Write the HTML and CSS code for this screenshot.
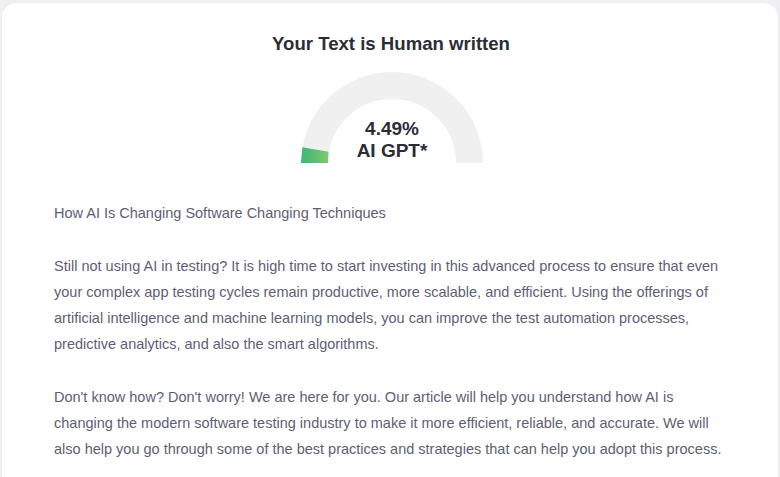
FILE: index.html
```html
<!DOCTYPE html>
<html>
<head>
<meta charset="utf-8">
<link rel="stylesheet" href="styles.css">
</head>
<body>
<div class="card">
  <h1 class="title">Your Text is Human written</h1>
  <div class="gauge">
    <svg class="gauge-svg" width="184" height="93" viewBox="0 0 184 93">
      <defs>
        <linearGradient id="g" x1="0" y1="0" x2="1" y2="0">
          <stop offset="0" stop-color="#3db57a"/>
          <stop offset="1" stop-color="#7cc96c"/>
        </linearGradient>
      </defs>
      <path d="M 14.5 92 A 77.5 77.5 0 0 1 169.5 92" fill="none" stroke="#f0f0f0" stroke-width="27"/>
      <path d="M 1 92 L 28 92 L 28.6 80.7 L 2.4 76.2 Z" fill="url(#g)"/>
    </svg>
    <div class="gauge-label">
      <div>4.49%</div>
      <div>AI GPT*</div>
    </div>
  </div>
  <div class="text">
    <p>How AI Is Changing Software Changing Techniques</p>
    <p>Still not using AI in testing? It is high time to start investing in this advanced process to ensure that even your complex app testing cycles remain productive, more scalable, and efficient. Using the offerings of artificial intelligence and machine learning models, you can improve the test automation processes, predictive analytics, and also the smart algorithms.</p>
    <p>Don't know how? Don't worry! We are here for you. Our article will help you understand how AI is changing the modern software testing industry to make it more efficient, reliable, and accurate. We will also help you go through some of the best practices and strategies that can help you adopt this process.</p>
  </div>
</div>
</body>
</html>
```
FILE: styles.css
```css
html, body {
  margin: 0;
  padding: 0;
  background: #eef0f3;
  font-family: "Liberation Sans", Arial, sans-serif;
}
body {
  padding: 3px 2px 0 2px;
  height: 477px;
  box-sizing: border-box;
  overflow: hidden;
}
.card {
  background: #ffffff;
  border-radius: 14px 14px 0 0;
  height: 100%;
  box-sizing: border-box;
  box-shadow: 0 0 2px rgba(0,0,0,0.06);
  padding-top: 31px;
  overflow: hidden;
}
.title {
  margin: 0;
  text-align: center;
  font-size: 18.6px;
  font-weight: bold;
  color: #2b2d36;
  line-height: 20px;
  padding-left: 2px;
}
.gauge {
  position: relative;
  width: 184px;
  height: 93px;
  margin: 17px auto 0;
  left: 2px;
}
.gauge-svg {
  display: block;
}
.gauge-label {
  position: absolute;
  left: 0;
  right: 0;
  top: 47px;
  text-align: center;
  font-size: 19px;
  font-weight: bold;
  color: #2b2d36;
  line-height: 22px;
}
.text {
  padding: 36px 52px 0 52px;
  color: #5d6075;
  font-size: 14.5px;
  line-height: 26px;
}
.text p {
  margin: 0 0 27px 0;
}
```
